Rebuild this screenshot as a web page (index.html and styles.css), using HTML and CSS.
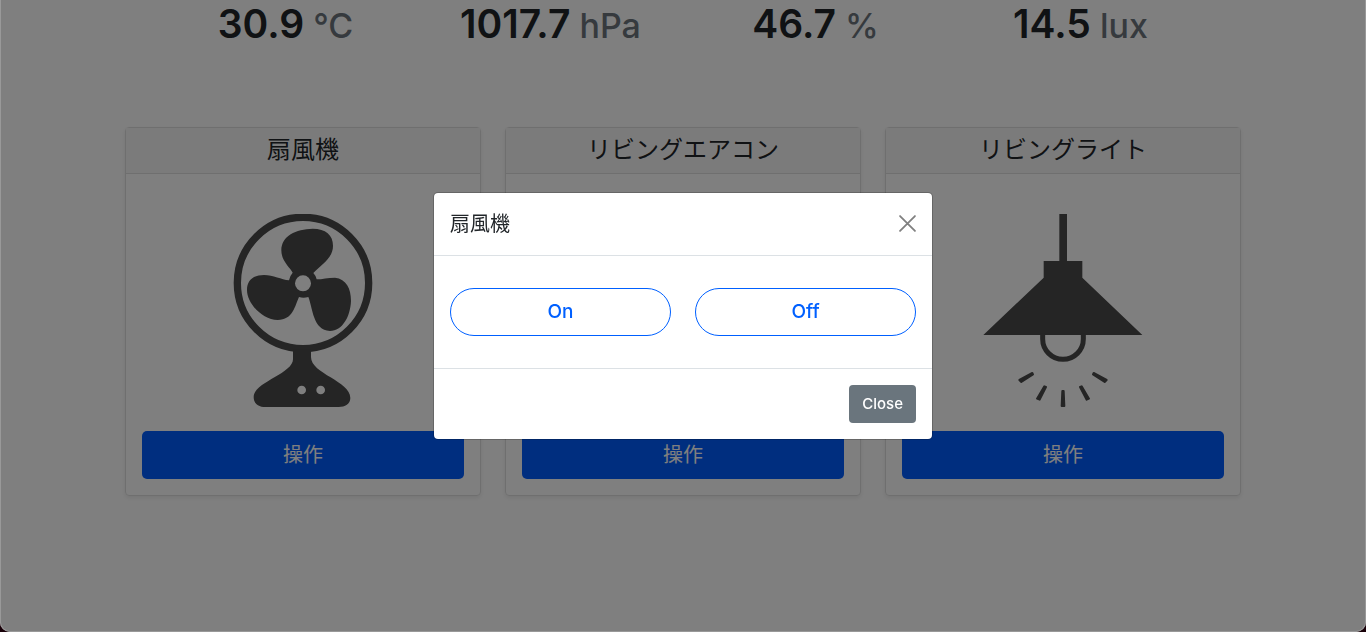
FILE: index.html
```
<!DOCTYPE html>
<html lang="ja">
<head>
<meta charset="utf-8">
<meta name="viewport" content="width=device-width, initial-scale=1">
<title>リビング</title>
<link rel="stylesheet" href="styles.css">
</head>
<body>
<main class="container">
  <section class="stats">
    <p class="stat">30.9<small class="unit"> °C</small></p>
    <p class="stat">1017.7<small class="unit"> hPa</small></p>
    <p class="stat">46.7<small class="unit"> %</small></p>
    <p class="stat">14.5<small class="unit"> lux</small></p>
  </section>
  <section class="cards">
    <article class="card">
      <h2 class="card-header">扇風機</h2>
      <div class="card-body">
        <svg class="card-icon" viewBox="9 42 480 579" aria-hidden="true">
          <circle cx="249" cy="249" r="197" fill="none" stroke="#4a4a4a" stroke-width="22"/>
          <g fill="#4a4a4a">
            <path d="M218 218C211 203 184 184 184 151C184 108 228 87 278 86C317 86 339 105 339 137C339 176 303 194 280 219Q287 226 290 238C307 238 323 233 345 233C379 237 393 265 393 303C391 350 367 393 330 393C278 391 278 322 265 291Q250 295 237 291C225 317 219 360 173 360C127 360 81 310 81 270C81 238 103 225 132 225C160 225 184 239 207 241Q209 228 218 218Z"/>
            <path d="M219 448H273V471C273 522 391 542 391 594C391 612 375 621 356 621H137C115 621 101 611 101 591C101 547 219 521 219 478Z"/>
          </g>
          <g fill="#fff"><circle cx="249" cy="250" r="24"/><circle cx="245" cy="570" r="13"/><circle cx="302" cy="570" r="13"/></g>
        </svg>
        <button class="btn btn-primary" type="button">操作</button>
      </div>
    </article>
    <article class="card">
      <h2 class="card-header">リビングエアコン</h2>
      <div class="card-body">
        <svg class="card-icon" viewBox="0 0 480 579" aria-hidden="true">
          <g fill="none" stroke="#4a4a4a" stroke-width="20" stroke-linecap="round">
            <rect x="20" y="130" width="440" height="160" rx="24"/>
            <path d="M90 235H390M120 350V430M240 350V450M360 350V430"/>
          </g>
        </svg>
        <button class="btn btn-primary" type="button">操作</button>
      </div>
    </article>
    <article class="card">
      <h2 class="card-header">リビングライト</h2>
      <div class="card-body">
        <svg class="card-icon" viewBox="39 42 480 579" aria-hidden="true">
          <path fill="#4a4a4a" d="M268 42H291V183H337V233L517 405H40L221 233V183H268Z"/>
          <path fill="none" stroke="#4a4a4a" stroke-width="15" d="M218 400V417A61 61 0 0 0 340 417V400"/>
          <path fill="#4a4a4a" stroke="#4a4a4a" stroke-width="6" stroke-linejoin="round" d="M187 519L189 523L154 546L148 540ZM223 559L228 561L209 599L201 596ZM277 573H281L283 618H275ZM335 559L330 561L350 599L357 596ZM371 519L369 523L404 546L410 540Z"/>
        </svg>
        <button class="btn btn-primary" type="button">操作</button>
      </div>
    </article>
  </section>
</main>
<div class="backdrop">
  <div class="modal" role="dialog" aria-modal="true" aria-labelledby="modal-title">
    <header class="modal-header">
      <h2 class="modal-title" id="modal-title">扇風機</h2>
      <button class="btn-close" type="button" aria-label="Close">
        <svg class="close-icon" viewBox="0 0 16 16" aria-hidden="true"><path d="M1 1L15 15M15 1L1 15" fill="none" stroke="currentColor" stroke-width="1.7" stroke-linecap="round"/></svg>
      </button>
    </header>
    <div class="modal-body">
      <button class="btn btn-outline" type="button">On</button>
      <button class="btn btn-outline" type="button">Off</button>
    </div>
    <footer class="modal-footer">
      <button class="btn btn-secondary" type="button">Close</button>
    </footer>
  </div>
</div>
</body>
</html>
```
FILE: styles.css
```
*, *::before, *::after { box-sizing: border-box; }

html { background: #180008; }

body {
  margin: 0;
  min-height: 100vh;
  background: #fff;
  border-radius: 0 0 10px 10px;
  color: #212529;
  font-family: Inter, "Noto Sans CJK JP", sans-serif;
  font-size: 16px;
  line-height: 24px;
}

h2, p { margin: 0; }

button { font-family: inherit; }

.container {
  max-width: 1140px;
  margin: 0 auto;
  padding: 0 12px 80px;
}

.stats {
  display: grid;
  grid-template-columns: repeat(4, 1fr);
  padding: 0 28px;
  margin-bottom: 79px;
}

.stat {
  height: 48px;
  font-size: 39px;
  font-weight: 600;
  line-height: 48px;
  text-align: center;
  white-space: nowrap;
}

.unit {
  color: #6c757d;
  font-size: 34px;
  font-weight: 500;
}

.cards {
  display: grid;
  grid-template-columns: repeat(3, 1fr);
  gap: 24px;
}

.card {
  border: 1px solid #dfdfdf;
  border-radius: 4px;
  box-shadow: 0 2px 4px rgba(0, 0, 0, 0.08);
  text-align: center;
}

.card-header {
  padding: 7px 16px 9px;
  background: #f7f7f7;
  border-bottom: 1px solid #dfdfdf;
  font-size: 24px;
  font-weight: 400;
  line-height: 29px;
}

.card-body {
  display: flex;
  flex-direction: column;
  align-items: center;
  padding: 16px;
}

.card-icon {
  width: 160px;
  margin: 24px 0;
}

.btn {
  padding: 8px 16px;
  border: 1px solid transparent;
  border-radius: 5px;
  font-size: 20px;
  line-height: 30px;
}

.btn-primary {
  width: 100%;
  background: #005cff;
  color: #fff;
}

.backdrop {
  position: fixed;
  inset: 0;
  display: flex;
  align-items: center;
  justify-content: center;
  background: rgba(0, 0, 0, 0.5);
  border: 1px solid rgba(255, 255, 255, 0.2);
  border-top: 0;
  border-radius: 0 0 10px 10px;
}

.modal {
  width: 500px;
  max-width: 100%;
  background: #fff;
  background-clip: padding-box;
  border: 1px solid rgba(0, 0, 0, 0.2);
  border-radius: 5px;
}

.modal-header {
  display: flex;
  align-items: center;
  justify-content: space-between;
  padding: 16px;
  border-bottom: 1px solid #dce1e5;
}

.modal-title {
  font-size: 20px;
  font-weight: 400;
  line-height: 30px;
}

.btn-close {
  display: flex;
  padding: 0;
  border: 0;
  background: none;
  color: #808080;
}

.close-icon { width: 17px; }

.modal-body {
  display: grid;
  grid-template-columns: 1fr 1fr;
  gap: 24px;
  padding: 32px 16px;
}

.btn-outline {
  border-color: #0060ff;
  border-radius: 24px;
  background: #fff;
  color: #0060ff;
  font-size: 19px;
  font-weight: 500;
}

.modal-footer {
  display: flex;
  justify-content: flex-end;
  padding: 16px;
  border-top: 1px solid #dce1e5;
}

.btn-secondary {
  padding: 6px 12px;
  border-radius: 4px;
  background: #6a757d;
  color: #fff;
  font-size: 15px;
  font-weight: 500;
  line-height: 24px;
}
```
